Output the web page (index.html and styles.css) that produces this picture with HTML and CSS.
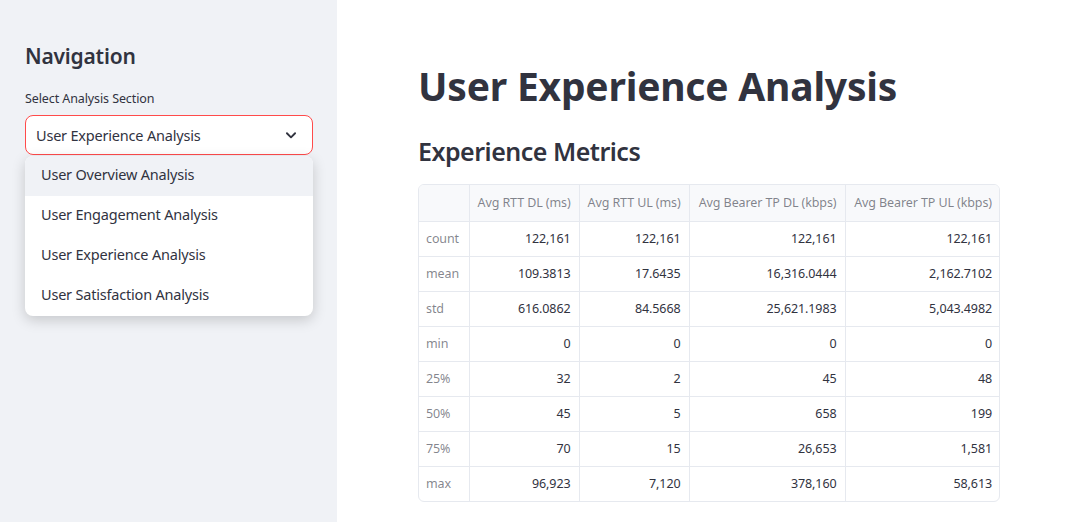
FILE: index.html
```html
<!DOCTYPE html>
<html>
<head>
<meta charset="utf-8">
<link rel="stylesheet" href="styles.css">
</head>
<body>
<div class="app">
  <aside class="sidebar">
    <h2 class="nav-title">Navigation</h2>
    <div class="label">Select Analysis Section</div>
    <div class="select-wrap">
      <div class="select">
        <span>User Experience Analysis</span>
        <svg class="chev" width="14" height="14" viewBox="0 0 24 24"><path d="M5 9l7 7 7-7" fill="none" stroke="#31333f" stroke-width="3.2" stroke-linecap="round" stroke-linejoin="round"/></svg>
      </div>
      <ul class="menu">
        <li class="hl">User Overview Analysis</li>
        <li>User Engagement Analysis</li>
        <li>User Experience Analysis</li>
        <li>User Satisfaction Analysis</li>
      </ul>
    </div>
  </aside>
  <main class="main">
    <h1 class="title">User Experience Analysis</h1>
    <h3 class="sub">Experience Metrics</h3>
    <div class="tbl-wrap">
      <table class="tbl">
        <colgroup>
          <col class="c0"><col class="c1"><col class="c2"><col class="c3"><col class="c4">
        </colgroup>
        <thead>
          <tr><th></th><th>Avg RTT DL (ms)</th><th>Avg RTT UL (ms)</th><th>Avg Bearer TP DL (kbps)</th><th>Avg Bearer TP UL (kbps)</th></tr>
        </thead>
        <tbody>
          <tr><td class="idx">count</td><td>122,161</td><td>122,161</td><td>122,161</td><td>122,161</td></tr>
          <tr><td class="idx">mean</td><td>109.3813</td><td>17.6435</td><td>16,316.0444</td><td>2,162.7102</td></tr>
          <tr><td class="idx">std</td><td>616.0862</td><td>84.5668</td><td>25,621.1983</td><td>5,043.4982</td></tr>
          <tr><td class="idx">min</td><td>0</td><td>0</td><td>0</td><td>0</td></tr>
          <tr><td class="idx">25%</td><td>32</td><td>2</td><td>45</td><td>48</td></tr>
          <tr><td class="idx">50%</td><td>45</td><td>5</td><td>658</td><td>199</td></tr>
          <tr><td class="idx">75%</td><td>70</td><td>15</td><td>26,653</td><td>1,581</td></tr>
          <tr><td class="idx">max</td><td>96,923</td><td>7,120</td><td>378,160</td><td>58,613</td></tr>
        </tbody>
      </table>
    </div>
  </main>
</div>
</body>
</html>
```
FILE: styles.css
```css
* { box-sizing: border-box; }
html, body { margin: 0; padding: 0; }
body {
  font-family: "Noto Sans", "Liberation Sans", sans-serif;
  color: #31333f;
  background: #ffffff;
  width: 1065px;
  height: 522px;
  overflow: hidden;
}
.app { display: flex; height: 522px; }
.sidebar {
  width: 337px;
  flex: none;
  background: #f0f2f6;
  padding: 40px 24px 0 25px;
}
.nav-title {
  margin: 0;
  font-size: 21px;
  font-weight: 600;
  line-height: 32px;
  letter-spacing: -0.2px;
}
.label {
  margin-top: 19px;
  font-size: 12.5px;
  line-height: 16px;
  letter-spacing: -0.1px;
}
.select-wrap { margin-top: 8px; width: 288px; }
.select {
  height: 40px;
  border: 1px solid #ff4b4b;
  border-radius: 8px;
  background: #fff;
  display: flex;
  align-items: center;
  justify-content: space-between;
  padding: 0 14px 0 10px;
  font-size: 14.5px;
  letter-spacing: -0.2px;
}
.chev { display: block; }
.menu {
  list-style: none;
  margin: 1px 0 0 0;
  padding: 0;
  background: #fff;
  border-radius: 8px;
  box-shadow: 0 4px 14px rgba(0,0,0,0.18);
  overflow: hidden;
}
.menu li {
  height: 40px;
  line-height: 37px;
  padding-left: 16px;
  font-size: 14.5px;
  letter-spacing: -0.2px;
  color: #31333f;
}
.menu li.hl { background: #f0f2f6; }
.main { flex: 1; padding: 58px 0 0 81px; }
.title {
  margin: 0;
  font-size: 39px;
  font-weight: 700;
  line-height: 56px;
  letter-spacing: -0.2px;
}
.sub {
  margin: 20px 0 0 0;
  font-size: 25px;
  font-weight: 600;
  line-height: 34px;
  letter-spacing: -0.5px;
}
.tbl-wrap {
  margin-top: 16px;
  width: 582px;
  border: 1px solid #e6e9ef;
  border-radius: 6px;
  overflow: hidden;
}
.tbl {
  border-collapse: collapse;
  table-layout: fixed;
  width: 100%;
  font-size: 12.5px;
  letter-spacing: -0.1px;
}
.c0 { width: 50px; } .c1 { width: 110px; } .c2 { width: 110px; } .c3 { width: 156px; } .c4 { width: 155px; }
.tbl th, .tbl td {
  height: 35px;
  padding: 0 8px;
  border-right: 1px solid #e6e9ef;
  border-bottom: 1px solid #e6e9ef;
  white-space: nowrap;
  overflow: hidden;
}
.tbl tr > :last-child { border-right: none; }
.tbl tbody tr:last-child td { border-bottom: none; }
.tbl th {
  background: #f8f9fb;
  font-weight: 400;
  color: rgba(49,51,63,0.6);
  text-align: right;
  height: 36px;
}
.tbl td { text-align: right; color: #31333f; }
.tbl td.idx { text-align: left; color: rgba(49,51,63,0.6); padding-left: 7px; }
```
